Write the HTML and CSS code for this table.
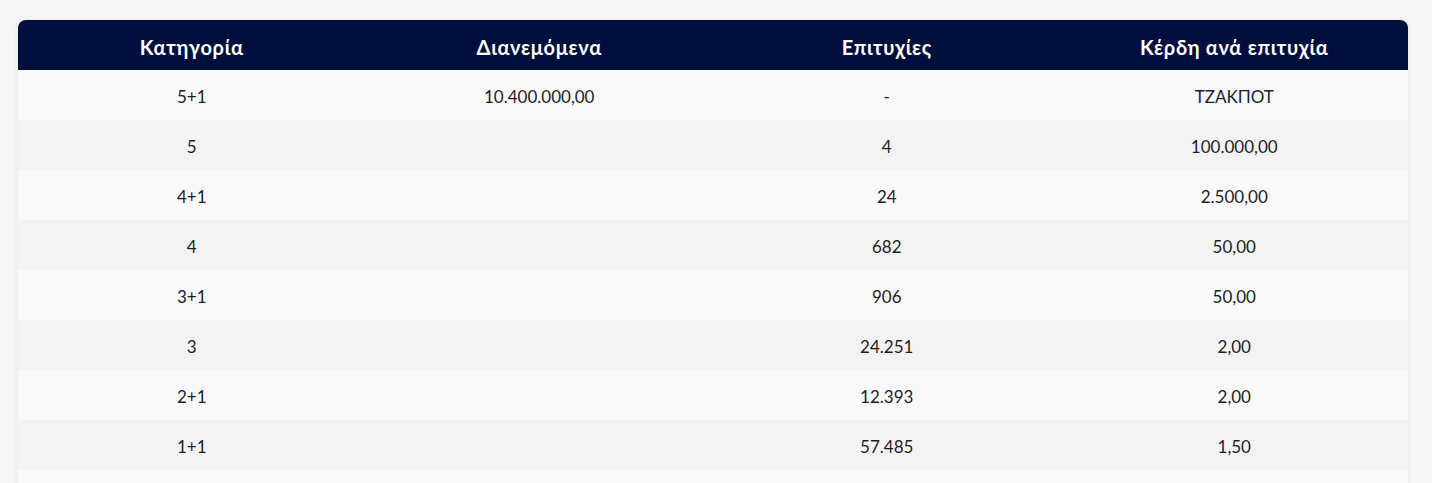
FILE: index.html
```html
<!DOCTYPE html>
<html lang="el">
<head>
<meta charset="utf-8">
<title>Κατηγορίες</title>
<link rel="stylesheet" href="styles.css">
</head>
<body>
<div class="page">
  <table class="results">
    <thead>
      <tr><th>Κατηγορία</th><th>Διανεμόμενα</th><th>Επιτυχίες</th><th>Κέρδη ανά επιτυχία</th></tr>
    </thead>
    <tbody>
      <tr><td>5+1</td><td>10.400.000,00</td><td>-</td><td>ΤΖΑΚΠΟΤ</td></tr>
      <tr><td>5</td><td></td><td>4</td><td>100.000,00</td></tr>
      <tr><td>4+1</td><td></td><td>24</td><td>2.500,00</td></tr>
      <tr><td>4</td><td></td><td>682</td><td>50,00</td></tr>
      <tr><td>3+1</td><td></td><td>906</td><td>50,00</td></tr>
      <tr><td>3</td><td></td><td>24.251</td><td>2,00</td></tr>
      <tr><td>2+1</td><td></td><td>12.393</td><td>2,00</td></tr>
      <tr><td>1+1</td><td></td><td>57.485</td><td>1,50</td></tr>
      <tr><td>&nbsp;</td><td></td><td></td><td></td></tr>
    </tbody>
  </table>
</div>
</body>
</html>
```
FILE: styles.css
```css
html, body {
  margin: 0;
  padding: 0;
  background: #f7f7fa;
  font-family: "Lato", "Noto Sans", sans-serif;
  color: #222;
}
.page {
  padding: 20px 24px 0 18px;
}
.results {
  width: 1390px;
  border-collapse: separate;
  border-spacing: 0;
  table-layout: fixed;
  border-radius: 8px 8px 0 0;
  box-shadow: 0 0 6px rgba(0, 0, 0, 0.08);
}
.results th {
  background: #020e3b;
  color: #fff;
  font-size: 20px;
  font-weight: 700;
  letter-spacing: 0.7px;
  height: 50px;
  padding: 3px 0 0;
  box-sizing: border-box;
  text-align: center;
}
.results th:first-child { border-top-left-radius: 8px; }
.results th:last-child { border-top-right-radius: 8px; }
.results td {
  height: 50px;
  padding: 2px 0 0;
  box-sizing: border-box;
  text-align: center;
  font-size: 17px;
  color: #1e1e1e;
}
.results tbody tr:nth-child(odd) td { background: #f9f9fb; }
.results tbody tr:nth-child(even) td { background: #f3f3f5; }
```
